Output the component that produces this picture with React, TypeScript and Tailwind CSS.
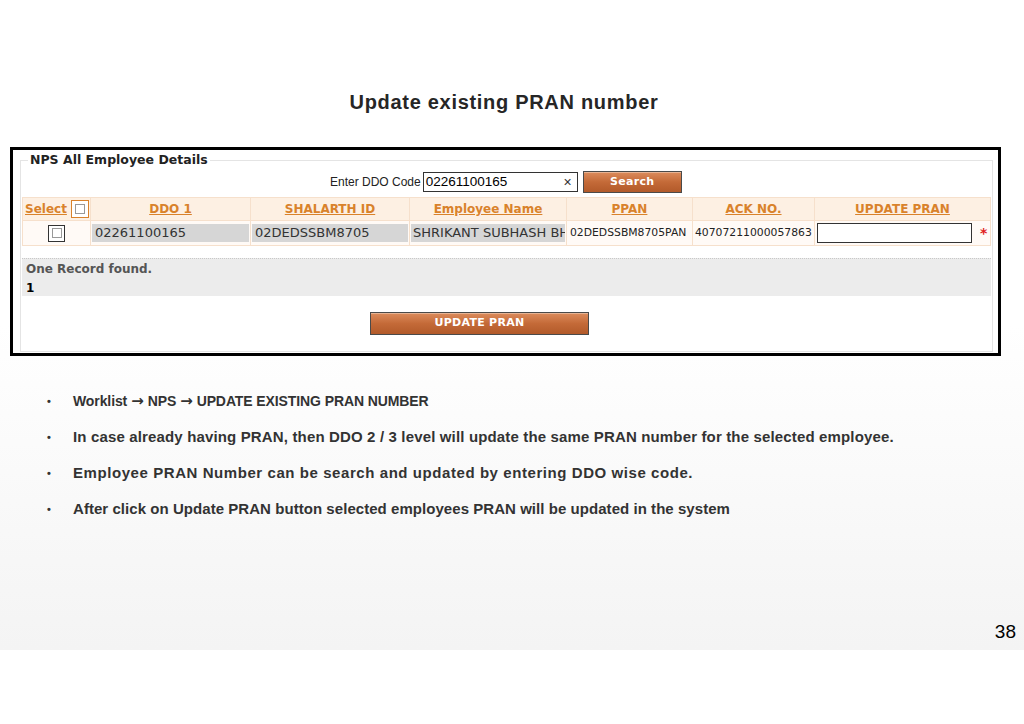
import React from 'react';

const verdana = { fontFamily: '"DejaVu Sans", Verdana, sans-serif' };
const arial = { fontFamily: '"Liberation Sans", Arial, sans-serif' };

const columns = [
  { label: 'DDO 1', w: 'w-[160px]' },
  { label: 'SHALARTH ID', w: 'w-[159px]' },
  { label: 'Employee Name', w: 'w-[157px]' },
  { label: 'PPAN', w: 'w-[126px]' },
  { label: 'ACK NO.', w: 'w-[122px]' },
  { label: 'UPDATE PRAN', w: 'w-[176px]' },
];

const Arrow = () => (
  <span className="text-[15px] font-bold mx-[4px]" style={verdana}>→</span>
);

const bullets: { text: React.ReactNode; cls: string }[] = [
  { text: <>Worklist<Arrow />NPS<Arrow />UPDATE EXISTING PRAN NUMBER</>, cls: 'text-[14px] tracking-[-0.1px]' },
  { text: 'In case already having PRAN, then DDO 2 / 3 level will update the same PRAN number for the selected employee.', cls: 'text-[15px] tracking-[0.15px]' },
  { text: 'Employee PRAN Number can be search and updated by entering DDO wise code.', cls: 'text-[15px] tracking-[0.57px]' },
  { text: 'After click on Update PRAN button selected employees PRAN will be updated in the system', cls: 'text-[15px] tracking-[0.05px]' },
];

function OrangeButton({ label, className }: { label: string; className: string }) {
  return (
    <button
      className={`${className} border border-[#4a4a4a] bg-gradient-to-b from-[#dc8c5c] via-[#c46a38] to-[#b25a2a] text-white font-bold text-[11px] tracking-wide shadow-[inset_0_1px_0_rgba(255,255,255,0.35)]`}
      style={verdana}
    >
      {label}
    </button>
  );
}

function Checkbox({ className }: { className: string }) {
  return (
    <div className={`${className} flex items-center justify-center bg-white`}>
      <div className="w-[10px] h-[10px] border border-[#999]" />
    </div>
  );
}

export default function App() {
  return (
    <div className="w-[1024px] h-[724px] bg-white overflow-hidden">
      <div className="h-[650px] flex flex-col bg-gradient-to-b from-white via-white to-[#f4f4f4]">
        <h1
          className="pt-[89px] pr-[16px] h-[116px] text-center text-[20px] font-bold text-[#262626] leading-[26px] tracking-[0.7px]"
          style={arial}
        >
          Update existing PRAN number
        </h1>

        <div className="ml-[10px] mt-[31px] w-[991px] h-[209px] border-[3px] border-black bg-white pl-[7px] pr-[6px]">
          <fieldset className="border border-[#e4e4e4] h-[199px] mt-[3px] px-px">
            <legend className="ml-[6px] px-[2px] text-[12.5px] font-bold text-[#222] leading-[14px]" style={verdana}>
              NPS All Employee Details
            </legend>

            <div className="flex items-center h-[24px] mt-[3px] pl-[308px]">
              <span className="text-[12px] text-[#222] mr-[2px]" style={arial}>Enter DDO Code</span>
              <div className="w-[155px] h-[20px] border border-[#333] flex items-center pl-[2px] pr-[5px]">
                <span className="flex-1 text-[13.5px] text-black" style={arial}>02261100165</span>
                <span className="text-[14px] text-[#333]" style={arial}>×</span>
              </div>
              <OrangeButton label="Search" className="ml-[5px] w-[99px] h-[22px]" />
            </div>

            <div className="mt-[3px]" style={verdana}>
              <div className="flex h-[24px] bg-[#fdf0e3]">
                <div className="w-[69px] flex items-center pl-[2px] gap-[4px] border border-[#f6e0cc]">
                  <span className="text-[12px] font-bold text-[#d9822b] underline">Select</span>
                  <Checkbox className="w-[18px] h-[18px] border border-[#d9822b]" />
                </div>
                {columns.map(c => (
                  <div
                    key={c.label}
                    className={`${c.w} flex items-center justify-center border border-l-0 border-[#f6e0cc] text-[12px] font-bold text-[#d9822b] underline`}
                  >
                    {c.label}
                  </div>
                ))}
              </div>
              <div className="flex h-[25px] bg-[#fffaf6]">
                <div className="w-[69px] flex items-center justify-center border border-t-0 border-[#f6e0cc]">
                  <Checkbox className="w-[17px] h-[17px] border border-[#333]" />
                </div>
                <div className="w-[160px] flex items-center px-[1px] border border-t-0 border-l-0 border-[#f6e0cc]">
                  <div className="w-full h-[18px] bg-[#d6d6d6] text-[13px] text-[#333] leading-[18px] pl-[3px]">02261100165</div>
                </div>
                <div className="w-[159px] flex items-center px-[1px] border border-t-0 border-l-0 border-[#f6e0cc]">
                  <div className="w-full h-[18px] bg-[#d6d6d6] text-[13px] text-[#333] leading-[18px] pl-[3px]">02DEDSSBM8705</div>
                </div>
                <div className="w-[157px] flex items-center px-[1px] border border-t-0 border-l-0 border-[#f6e0cc] overflow-hidden">
                  <div className="w-full h-[18px] bg-[#d6d6d6] text-[13px] text-[#333] leading-[18px] pl-[2px] overflow-hidden whitespace-nowrap">SHRIKANT SUBHASH BHOSALE</div>
                </div>
                <div className="w-[126px] flex items-center pl-[3px] border border-t-0 border-l-0 border-[#f6e0cc] text-[10.8px] text-[#222] whitespace-nowrap">
                  02DEDSSBM8705PAN
                </div>
                <div className="w-[122px] flex items-center pl-[2px] border border-t-0 border-l-0 border-[#f6e0cc] text-[10.8px] text-[#222] whitespace-nowrap">
                  40707211000057863
                </div>
                <div className="w-[176px] flex items-center pl-[2px] border border-t-0 border-l-0 border-[#f6e0cc]">
                  <div className="w-[155px] h-[20px] border border-[#333] bg-white" />
                  <span className="ml-[8px] text-[14px] text-[#e02020] font-bold">*</span>
                </div>
              </div>

              <div className="mt-[12px] h-[38px] bg-[#ececec] border-t border-dotted border-[#c8c8c8] pl-[4px] pt-[2px]">
                <div className="text-[12px] font-bold text-[#555] leading-[16px]">One Record found.</div>
                <div className="text-[12px] font-bold text-black leading-[16px] mt-[3px]">1</div>
              </div>
            </div>

            <div className="flex pl-[348px] mt-[16px]">
              <OrangeButton label="UPDATE PRAN" className="w-[219px] h-[23px]" />
            </div>
          </fieldset>
        </div>

        <ul className="mt-[35px] flex flex-col gap-[15px] font-bold text-[#333]" style={arial}>
          {bullets.map((b, i) => (
            <li key={i} className="flex h-[21px] items-center">
              <span className="w-[73px] pl-[47px] text-[11px]">•</span>
              <span className={b.cls}>{b.text}</span>
            </li>
          ))}
        </ul>

        <div className="mt-auto mb-[4px] pr-[8px] text-right text-[19px] text-black" style={arial}>38</div>
      </div>
    </div>
  );
}
